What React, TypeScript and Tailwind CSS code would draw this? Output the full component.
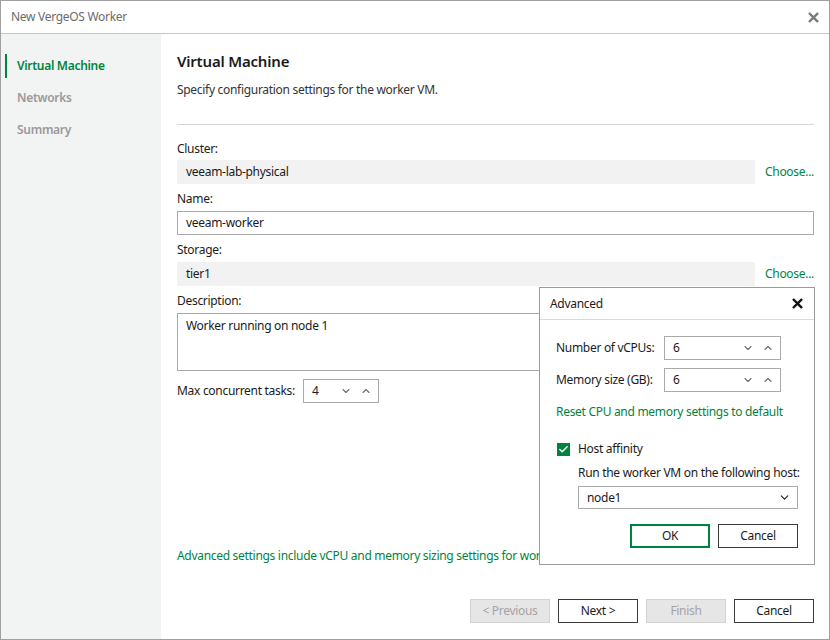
import { ChevronDown, ChevronUp, Check } from 'lucide-react';

const font = { fontFamily: '"Segoe UI", "Noto Sans", "Open Sans", sans-serif' };

function XMark({ className }: { className?: string }) {
  return (
    <svg viewBox="0 0 12 12" className={className}>
      <path d="M2 2 L10 10 M10 2 L2 10" stroke="currentColor" strokeWidth="2.6" strokeLinecap="square" />
    </svg>
  );
}

function Spin({ value, width }: { value: string; width: string }) {
  return (
    <div className={`flex items-center h-[24px] border border-[#a9a9a9] bg-white pl-[8px] pr-[6px] ${width}`}>
      <span className="flex-1 text-[12px] text-[#1b1b1b]">{value}</span>
      <ChevronDown size={12} strokeWidth={2.2} className="text-[#6b6b6b] mr-[8px]" />
      <ChevronUp size={12} strokeWidth={2.2} className="text-[#6b6b6b]" />
    </div>
  );
}

function FooterButton({ label, disabled }: { label: string; disabled?: boolean }) {
  return (
    <button
      className={
        disabled
          ? 'w-[80px] h-[24px] text-[12px] tracking-[-0.3px] bg-[#e6e6e6] border border-[#d2d2d2] text-[#a3a3a3]'
          : 'w-[80px] h-[24px] text-[12px] tracking-[-0.3px] bg-white border border-[#3a3a3a] text-[#1b1b1b]'
      }
    >
      {label}
    </button>
  );
}

export default function App() {
  return (
    <div style={font} className="relative w-[830px] h-[640px] bg-white border border-[#a0a0a0] flex flex-col overflow-hidden text-[#1b1b1b] tracking-[-0.3px]">
      {/* Title bar */}
      <div className="h-[33px] shrink-0 flex items-center justify-between pl-[10px] pr-[10px] border-b border-[#c4c4c4]">
        <span className="text-[12px] text-[#6b6b6b]">New VergeOS Worker</span>
        <XMark className="w-[11px] h-[11px] text-[#7a7a7a]" />
      </div>

      <div className="flex flex-1 min-h-0">
        {/* Steps */}
        <div className="w-[160px] shrink-0 bg-[#f2f3f3] pt-[16px] text-[12px] font-semibold">
          <div className="h-[32px] flex items-center">
            <div className="ml-[4px] w-[2px] h-[24px] bg-[#00843d]" />
            <span className="ml-[10px] text-[#00843d]">Virtual Machine</span>
          </div>
          <div className="h-[32px] flex items-center pl-[16px] text-[#9a9a9a]">Networks</div>
          <div className="h-[32px] flex items-center pl-[16px] text-[#9a9a9a]">Summary</div>
        </div>

        {/* Main */}
        <div className="flex-1 flex flex-col pl-[16px] pr-[15px] pt-[17px] pb-[16px] text-[12px]">
          <div className="h-[20px] leading-[20px] text-[15px] font-semibold tracking-[-0.2px]">Virtual Machine</div>
          <div className="mt-[11px] h-[16px] leading-[16px] text-[#333]">Specify configuration settings for the worker VM.</div>
          <div className="mt-[26px] h-px bg-[#d4d4d4]" />

          <div className="mt-[16px] h-[16px] leading-[16px]">Cluster:</div>
          <div className="mt-[3px] flex items-center">
            <div className="w-[578px] h-[24px] bg-[#f2f2f2] flex items-center pl-[9px]">veeam-lab-physical</div>
            <span className="ml-auto text-[#00843d]">Choose...</span>
          </div>

          <div className="mt-[7px] h-[16px] leading-[16px]">Name:</div>
          <div className="mt-[4px] h-[24px] border border-[#a9a9a9] flex items-center pl-[8px]">veeam-worker</div>

          <div className="mt-[7px] h-[16px] leading-[16px]">Storage:</div>
          <div className="mt-[4px] flex items-center">
            <div className="w-[578px] h-[24px] bg-[#f2f2f2] flex items-center pl-[9px]">tier1</div>
            <span className="ml-auto text-[#00843d]">Choose...</span>
          </div>

          <div className="mt-[7px] h-[16px] leading-[16px]">Description:</div>
          <div className="mt-[4px] h-[58px] border border-[#a9a9a9] pl-[8px] pt-[3px]">Worker running on node 1</div>

          <div className="mt-[8px] flex items-center">
            <span className="w-[126px]">Max concurrent tasks:</span>
            <Spin value="4" width="w-[76px]" />
          </div>

          <div className="flex-1" />
          <div className="h-[16px] leading-[16px] text-[#00843d]">
            Advanced settings include vCPU and memory sizing settings for worker VM.
          </div>

          <div className="mt-[35px] flex justify-end gap-[8px]">
            <FooterButton label="< Previous" disabled />
            <FooterButton label="Next >" />
            <FooterButton label="Finish" disabled />
            <FooterButton label="Cancel" />
          </div>
        </div>
      </div>

      {/* Advanced popup */}
      <div className="absolute left-[538px] top-[286px] w-[276px] h-[278px] bg-white border border-[#9a9a9a] flex flex-col text-[12px]">
        <div className="h-[32px] shrink-0 flex items-center justify-between pl-[10px] pr-[11px] border-b border-[#dadada]">
          <span>Advanced</span>
          <XMark className="w-[11px] h-[11px] text-[#111]" />
        </div>
        <div className="flex-1 flex flex-col pl-[16px] pr-[16px] pt-[16px]">
          <div className="flex items-center">
            <span className="w-[108px]">Number of vCPUs:</span>
            <Spin value="6" width="w-[117px]" />
          </div>
          <div className="mt-[8px] flex items-center">
            <span className="w-[108px]">Memory size (GB):</span>
            <Spin value="6" width="w-[117px]" />
          </div>
          <div className="mt-[12px] h-[16px] leading-[16px] text-[#00843d] whitespace-nowrap">Reset CPU and memory settings to default</div>

          <div className="mt-[21px] flex items-center h-[16px]">
            <div className="ml-[1px] w-[13px] h-[13px] bg-[#00843d] flex items-center justify-center">
              <Check size={11} strokeWidth={3} className="text-white" />
            </div>
            <span className="ml-[8px]">Host affinity</span>
          </div>
          <div className="mt-[8px] ml-[22px] h-[16px] leading-[16px] whitespace-nowrap">Run the worker VM on the following host:</div>
          <div className="mt-[5px] ml-[22px] h-[23px] border border-[#a9a9a9] flex items-center pl-[8px] pr-[6px]">
            <span className="flex-1">node1</span>
            <ChevronDown size={13} strokeWidth={2.2} className="text-[#222]" />
          </div>

          <div className="mt-[15px] flex justify-end gap-[8px]">
            <button className="w-[80px] h-[24px] border-2 border-[#00843d] bg-white text-[12px]">OK</button>
            <button className="w-[80px] h-[24px] border border-[#3a3a3a] bg-white text-[12px]">Cancel</button>
          </div>
        </div>
      </div>
    </div>
  );
}
